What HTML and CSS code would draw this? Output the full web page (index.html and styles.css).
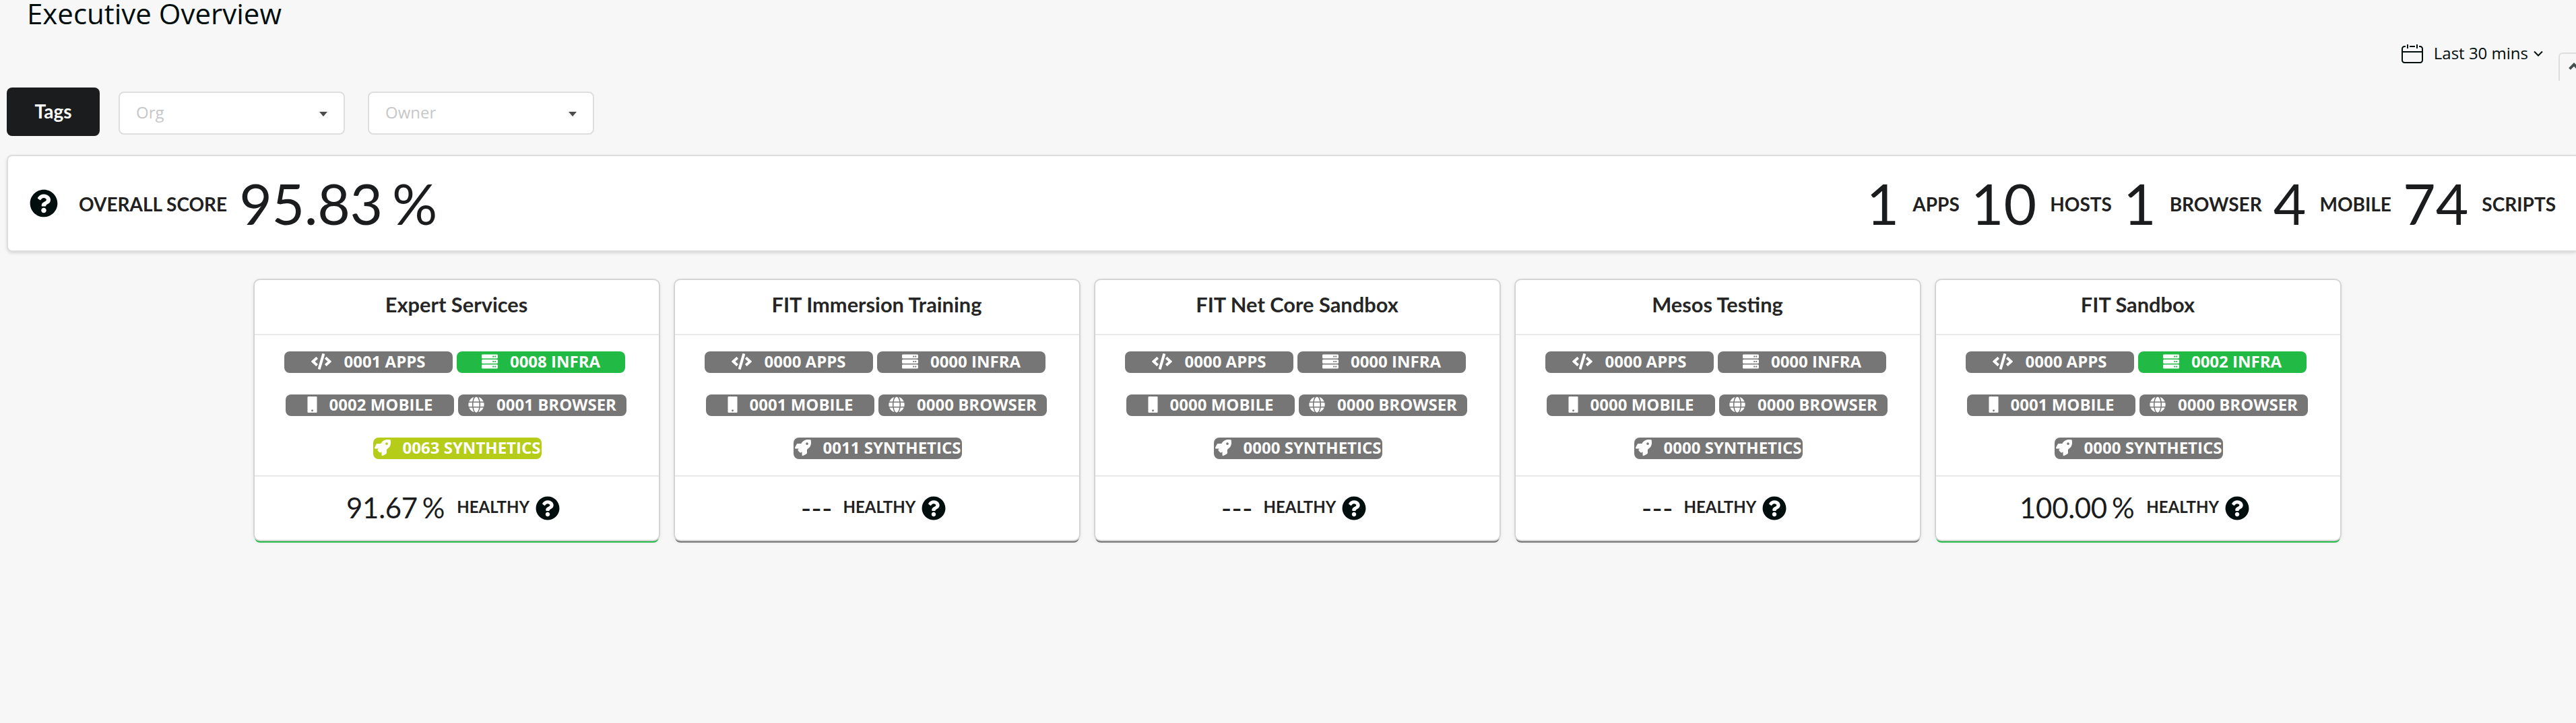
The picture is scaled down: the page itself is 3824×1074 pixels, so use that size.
FILE: index.html
```html
<!DOCTYPE html>
<html lang="en">
<head>
<meta charset="utf-8">
<title>Executive Overview</title>
<link rel="stylesheet" href="styles.css">
</head>
<body>
<svg class="sprite" aria-hidden="true">
  <symbol id="help" viewBox="0 0 512 512"><path d="M504 256c0 136.997-111.043 248-248 248S8 392.997 8 256C8 119.083 119.043 8 256 8s248 111.083 248 248zM262.655 90c-54.497 0-89.255 22.957-116.549 63.758-3.536 5.286-2.353 12.415 2.715 16.258l34.699 26.31c5.205 3.947 12.621 3.008 16.665-2.122 17.864-22.658 30.113-35.797 57.303-35.797 20.429 0 45.698 13.148 45.698 32.958 0 14.976-12.363 22.667-32.534 33.976C247.128 238.528 216 254.941 216 296v4c0 6.627 5.373 12 12 12h56c6.627 0 12-5.373 12-12v-1.333c0-28.462 83.186-29.647 83.186-106.667 0-58.002-60.165-102-116.531-102zM256 338c-25.365 0-46 20.635-46 46 0 25.364 20.635 46 46 46s46-20.636 46-46c0-25.365-20.635-46-46-46z"/></symbol>
  <symbol id="code" viewBox="0 0 640 512"><path d="M278.900 511.500l-61-17.700c-6.400-1.800-10-8.500-8.200-14.900L346.200 8.700c1.800-6.400 8.500-10 14.900-8.200l61 17.700c6.400 1.800 10 8.500 8.200 14.900L293.800 503.300c-1.900 6.400-8.500 10.100-14.900 8.200zm-114-112.200l43.500-46.400c4.600-4.900 4.300-12.700-.8-17.200L117 256l90.600-79.700c5.100-4.500 5.500-12.300.8-17.200l-43.500-46.400c-4.500-4.800-12.100-5.100-17-.5L3.800 247.200c-5.100 4.700-5.100 12.800 0 17.500l144.100 135.100c4.900 4.600 12.500 4.400 17-.5zm327.200.6l144.100-135.100c5.100-4.700 5.100-12.800 0-17.500L492.100 112.100c-4.800-4.500-12.400-4.300-17 .5L431.600 159c-4.600 4.900-4.300 12.700.8 17.200L523 256l-90.600 79.700c-5.100 4.500-5.500 12.300-.8 17.200l43.500 46.400c4.500 4.900 12.100 5.100 17 .6z"/></symbol>
  <symbol id="server" viewBox="0 0 512 512"><path d="M480 160H32c-17.673 0-32-14.327-32-32V64c0-17.673 14.327-32 32-32h448c17.673 0 32 14.327 32 32v64c0 17.673-14.327 32-32 32zm-48-88c-13.255 0-24 10.745-24 24s10.745 24 24 24 24-10.745 24-24-10.745-24-24-24zm-64 0c-13.255 0-24 10.745-24 24s10.745 24 24 24 24-10.745 24-24-10.745-24-24-24zm112 248H32c-17.673 0-32-14.327-32-32v-64c0-17.673 14.327-32 32-32h448c17.673 0 32 14.327 32 32v64c0 17.673-14.327 32-32 32zm-48-88c-13.255 0-24 10.745-24 24s10.745 24 24 24 24-10.745 24-24-10.745-24-24-24zm-64 0c-13.255 0-24 10.745-24 24s10.745 24 24 24 24-10.745 24-24-10.745-24-24-24zm112 248H32c-17.673 0-32-14.327-32-32v-64c0-17.673 14.327-32 32-32h448c17.673 0 32 14.327 32 32v64c0 17.673-14.327 32-32 32zm-48-88c-13.255 0-24 10.745-24 24s10.745 24 24 24 24-10.745 24-24-10.745-24-24-24zm-64 0c-13.255 0-24 10.745-24 24s10.745 24 24 24 24-10.745 24-24-10.745-24-24-24z"/></symbol>
  <symbol id="phone" viewBox="0 0 320 512"><path fill-rule="evenodd" d="M34 0h252a24 24 0 0 1 24 24v464a24 24 0 0 1-24 24H34a24 24 0 0 1-24-24V24A24 24 0 0 1 34 0zM160 418a30 30 0 1 0 0 60 30 30 0 0 0 0-60z"/></symbol>
  <symbol id="globe" viewBox="0 0 496 512"><path d="M336.500 160C322 70.700 287.800 8 248 8s-74 62.700-88.500 152h177zM152 256c0 22.200 1.200 43.500 3.300 64h185.300c2.100-20.500 3.300-41.800 3.300-64s-1.200-43.500-3.300-64H155.300c-2.100 20.500-3.300 41.800-3.300 64zm324.700-96c-28.600-67.900-86.500-120.400-158-141.600 24.400 33.800 41.200 84.700 50 141.600h108zM177.200 18.400C105.800 39.600 47.800 92.100 19.300 160h108c8.700-56.900 25.500-107.800 49.900-141.600zM487.400 192H372.700c2.100 21 3.300 42.500 3.300 64s-1.200 43-3.300 64h114.600c5.500-20.500 8.600-41.800 8.600-64s-3.100-43.500-8.500-64zM120 256c0-21.500 1.200-43 3.300-64H8.600C3.200 212.500 0 233.800 0 256s3.200 43.500 8.600 64h114.600c-2-21-3.200-42.500-3.200-64zm39.500 96c14.500 89.300 48.700 152 88.500 152s74-62.700 88.500-152h-177zm159.300 141.600c71.400-21.200 129.400-73.700 158-141.600h-108c-8.800 56.900-25.600 107.800-50 141.600zM19.300 352c28.600 67.900 86.500 120.400 158 141.600-24.400-33.800-41.200-84.700-50-141.600h-108z"/></symbol>
  <symbol id="rocket" viewBox="0 0 512 512"><path d="M505.120 19.094c-1.189-5.531-6.658-11-12.207-12.187C460.716 0 435.507 0 410.407 0 307.175 0 245.269 55.203 199.052 128H94.838c-16.348.016-35.557 11.875-42.887 26.484L2.516 253.297A28.400 28.400 0 0 0 0 264a24.008 24.008 0 0 0 24.006 24h103.843l-22.475 22.469c-11.365 11.361-12.996 32.257 0 45.250L156.248 406.625c11.156 11.188 32.156 13.156 45.277 0L224 384.156V488a24.008 24.008 0 0 0 24 24 28.560 28.560 0 0 0 10.707-2.516l98.728-49.390c14.629-7.297 26.508-26.500 26.508-42.860V312.797c72.594-46.313 128.030-108.406 128.030-211.094.078-25.203.078-50.406-6.853-82.609zM384.040 168a40 40 0 1 1 40-40 40.023 40.023 0 0 1-40 40z"/></symbol>
</svg>

<header class="page-head">
  <h1 class="page-title">Executive Overview</h1>
  <div class="page-tools">
    <div class="time-picker">
      <svg class="calendar" viewBox="0 0 32 28"><path d="M6 3H4.500A3.500 3.500 0 0 0 1 6.500v17A3.500 3.500 0 0 0 4.500 27h23a3.500 3.500 0 0 0 3.500-3.500v-17A3.500 3.500 0 0 0 27.500 3H26M9 0v6M23 0v6M12 3h8M1 11h30"/></svg>
      <span class="time-label">Last 30 mins</span>
      <svg class="chevron" viewBox="0 0 14 9"><path d="M1 1.500l6 6 6-6"/></svg>
    </div>
    <div class="collapse"><svg class="caret-up" viewBox="0 0 16 11"><path d="M1.500 9.300L8 2.800l6.500 6.500"/></svg></div>
  </div>
</header>

<div class="filters">
  <button class="tags">Tags</button>
  <div class="select"><span>Org</span><i class="arrow"></i></div>
  <div class="select owner"><span>Owner</span><i class="arrow"></i></div>
</div>

<section class="summary">
  <svg class="help-lg"><use href="#help"/></svg>
  <span class="label">OVERALL SCORE</span>
  <span class="value score">95.83 %</span>
  <div class="totals">
    <div class="total"><span class="value">1</span><span class="label">APPS</span></div>
    <div class="total"><span class="value">10</span><span class="label">HOSTS</span></div>
    <div class="total"><span class="value">1</span><span class="label">BROWSER</span></div>
    <div class="total"><span class="value">4</span><span class="label">MOBILE</span></div>
    <div class="total"><span class="value">74</span><span class="label">SCRIPTS</span></div>
  </div>
</section>

<main class="cards">
  <article class="card good">
    <h2>Expert Services</h2>
    <div class="body">
      <div class="row first"><span class="pill"><svg class="wide"><use href="#code"/></svg><b>0001 APPS</b></span><span class="pill green"><svg><use href="#server"/></svg><b>0008 INFRA</b></span></div>
      <div class="row second"><span class="pill"><svg class="slim"><use href="#phone"/></svg><b>0002 MOBILE</b></span><span class="pill"><svg><use href="#globe"/></svg><b>0001 BROWSER</b></span></div>
      <div class="row third"><span class="pill olive"><svg><use href="#rocket"/></svg><b>0063 SYNTHETICS</b></span></div>
    </div>
    <footer><span class="health">91.67 %</span><span class="caption">HEALTHY</span><svg class="help-sm"><use href="#help"/></svg></footer>
  </article>
  <article class="card">
    <h2>FIT Immersion Training</h2>
    <div class="body">
      <div class="row first"><span class="pill"><svg class="wide"><use href="#code"/></svg><b>0000 APPS</b></span><span class="pill"><svg><use href="#server"/></svg><b>0000 INFRA</b></span></div>
      <div class="row second"><span class="pill"><svg class="slim"><use href="#phone"/></svg><b>0001 MOBILE</b></span><span class="pill"><svg><use href="#globe"/></svg><b>0000 BROWSER</b></span></div>
      <div class="row third"><span class="pill"><svg><use href="#rocket"/></svg><b>0011 SYNTHETICS</b></span></div>
    </div>
    <footer><span class="health none">---</span><span class="caption">HEALTHY</span><svg class="help-sm"><use href="#help"/></svg></footer>
  </article>
  <article class="card">
    <h2>FIT Net Core Sandbox</h2>
    <div class="body">
      <div class="row first"><span class="pill"><svg class="wide"><use href="#code"/></svg><b>0000 APPS</b></span><span class="pill"><svg><use href="#server"/></svg><b>0000 INFRA</b></span></div>
      <div class="row second"><span class="pill"><svg class="slim"><use href="#phone"/></svg><b>0000 MOBILE</b></span><span class="pill"><svg><use href="#globe"/></svg><b>0000 BROWSER</b></span></div>
      <div class="row third"><span class="pill"><svg><use href="#rocket"/></svg><b>0000 SYNTHETICS</b></span></div>
    </div>
    <footer><span class="health none">---</span><span class="caption">HEALTHY</span><svg class="help-sm"><use href="#help"/></svg></footer>
  </article>
  <article class="card">
    <h2>Mesos Testing</h2>
    <div class="body">
      <div class="row first"><span class="pill"><svg class="wide"><use href="#code"/></svg><b>0000 APPS</b></span><span class="pill"><svg><use href="#server"/></svg><b>0000 INFRA</b></span></div>
      <div class="row second"><span class="pill"><svg class="slim"><use href="#phone"/></svg><b>0000 MOBILE</b></span><span class="pill"><svg><use href="#globe"/></svg><b>0000 BROWSER</b></span></div>
      <div class="row third"><span class="pill"><svg><use href="#rocket"/></svg><b>0000 SYNTHETICS</b></span></div>
    </div>
    <footer><span class="health none">---</span><span class="caption">HEALTHY</span><svg class="help-sm"><use href="#help"/></svg></footer>
  </article>
  <article class="card good">
    <h2>FIT Sandbox</h2>
    <div class="body">
      <div class="row first"><span class="pill"><svg class="wide"><use href="#code"/></svg><b>0000 APPS</b></span><span class="pill green"><svg><use href="#server"/></svg><b>0002 INFRA</b></span></div>
      <div class="row second"><span class="pill"><svg class="slim"><use href="#phone"/></svg><b>0001 MOBILE</b></span><span class="pill"><svg><use href="#globe"/></svg><b>0000 BROWSER</b></span></div>
      <div class="row third"><span class="pill"><svg><use href="#rocket"/></svg><b>0000 SYNTHETICS</b></span></div>
    </div>
    <footer><span class="health">100.00 %</span><span class="caption">HEALTHY</span><svg class="help-sm"><use href="#help"/></svg></footer>
  </article>
</main>
</body>
</html>
```
FILE: styles.css
```css
* { box-sizing: border-box; }
body {
  margin: 0;
  min-height: 1074px;
  background: #f7f7f7;
  color: #1b1c1d;
  font-family: Lato, sans-serif;
}
svg { flex: none; display: block; }
.sprite { display: none; }

/* page header */
.page-head { height: 120px; color: #000e0e; }
.page-title {
  margin: 0;
  padding-left: 40px;
  height: 40px;
  font: 400 42px/40px "Open Sans", sans-serif;
}
.page-tools { display: flex; justify-content: flex-end; height: 80px; }
.time-picker { display: flex; padding-top: 26px; margin-right: 23px; }
.calendar { width: 32px; height: 28px; margin-right: 16px; }
.calendar path, .chevron path { fill: none; stroke: #000e0e; stroke-width: 2; }
.time-label { font: 24px/26px "Open Sans", sans-serif; margin-right: 8px; }
.chevron { width: 14px; height: 9px; margin-top: 9px; }
.collapse {
  width: 26px;
  height: 42px;
  margin-top: 38px;
  padding: 13px 0 0 13px;
  border: solid #dedede;
  border-width: 2px 0 0 2px;
  border-radius: 6px 0 0 0;
  overflow: hidden;
}
.caret-up { width: 16px; height: 11px; }
.caret-up path { fill: none; stroke: #454f4f; stroke-width: 4; }

/* filters */
.filters { display: flex; align-items: center; margin: 10px 0 0 10px; height: 72px; }
.tags {
  width: 138px;
  height: 72px;
  padding: 0 0 3px;
  border: 0;
  border-radius: 8px;
  background: #1b1c1d;
  color: #fff;
  font: 700 28px/28px Lato, sans-serif;
}
.select {
  display: flex;
  align-items: center;
  justify-content: space-between;
  width: 336px;
  height: 64px;
  margin: 4px 0 0 28px;
  padding: 0 24px 2px;
  border: 2px solid #dedede;
  border-radius: 8px;
  background: #fff;
  color: #c7c7c7;
  font: 24px/30px "Open Sans", sans-serif;
}
.owner { margin-left: 34px; }
.arrow {
  border: solid transparent;
  border-width: 7px 6px 0;
  border-top-color: #4c4c4c;
  margin-top: 4px;
}

/* summary bar */
.summary {
  display: flex;
  align-items: center;
  height: 144px;
  margin: 28px 0 0 10px;
  padding: 0 30px 0 32px;
  border: solid #dededf;
  border-width: 2px 0 2px 2px;
  border-radius: 8px 0 0 8px;
  background: #fff;
  box-shadow: 0 2px 4px rgba(34, 36, 38, .15);
}
.help-lg, .help-sm { fill: #000e0e; }
.help-lg { width: 42px; height: 42px; margin-right: 31px; }
.label { font: 700 28px/28px Lato, sans-serif; color: #212121; padding-top: 2px; }
.value { font: 400 84px/84px Lato, sans-serif; }
.score { margin-left: 18px; word-spacing: -7px; letter-spacing: -.4px; }
.totals { display: flex; gap: 17px; margin-left: auto; }
.total { display: flex; align-items: center; gap: 20px; }

/* service cards */
.cards { display: flex; gap: 24px; margin: 42px 0 0 378px; }
.card {
  width: 600px;
  height: 386px;
  border-radius: 8px;
  background: #fff;
  box-shadow: 0 0 0 2px #d4d4d5, 0 4px 0 0 #767676, 0 2px 6px 0 #d4d4d5;
}
.card.good { box-shadow: 0 0 0 2px #d4d4d5, 0 4px 0 0 #21ba45, 0 2px 6px 0 #d4d4d5; }
.card h2 {
  height: 82px;
  margin: 0;
  padding: 21px 1px 0 0;
  border-bottom: 2px solid #e9e9e9;
  text-align: center;
  font: 700 30.800px/32px Lato, sans-serif;
  color: #262626;
}
.body { display: flex; flex-direction: column; gap: 32px; height: 208px; padding-top: 24px; }
.row { display: flex; justify-content: center; gap: 6px; }
.first { padding-right: 6px; }
.second { padding-right: 2px; }
.third { padding-left: 2px; }
.pill {
  display: flex;
  align-items: center;
  justify-content: center;
  gap: 18px;
  width: 250px;
  height: 32px;
  padding-bottom: 2px;
  border-radius: 8px;
  background: #767676;
  color: #fff;
  white-space: nowrap;
}
.pill b { font: 700 24px/28px "Open Sans", sans-serif; }
.pill svg { width: 24px; height: 24px; fill: #fff; }
.pill .wide { width: 30px; }
.pill .slim { width: 15px; }
.green { background: #21ba45; }
.olive { background: #b5cc18; }
.card footer {
  display: flex;
  align-items: center;
  justify-content: center;
  height: 96px;
  padding: 0 11px 1px 0;
  border-top: 2px solid #e9e9e9;
}
.health { font: 400 42px/42px Lato, sans-serif; margin: 0 18px 2px 0; word-spacing: -3.5px; letter-spacing: -.3px; }
.health.none { margin-right: 16px; letter-spacing: 0; }
.caption { font: 700 24px/24px Lato, sans-serif; color: #212121; margin: 0 9px 3px 0; }
.help-sm { width: 36px; height: 36px; }
```
